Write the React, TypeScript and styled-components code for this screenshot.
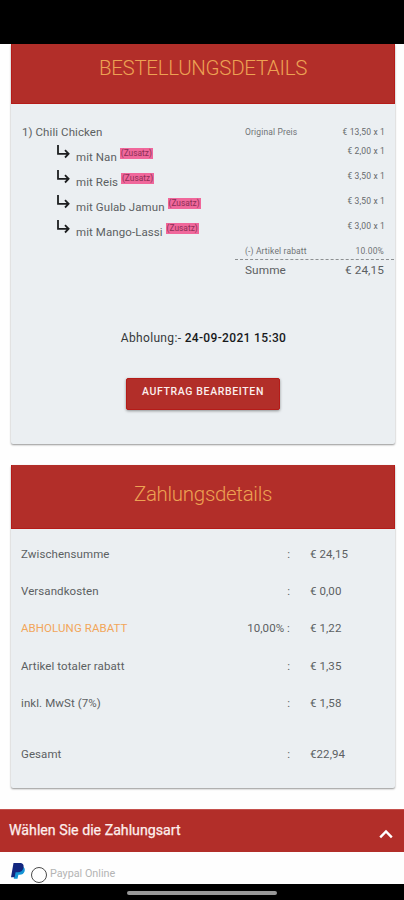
import React from 'react';
import styled, { createGlobalStyle } from 'styled-components';

const GlobalStyle = createGlobalStyle`
  * { box-sizing: border-box; }
  body { margin: 0; background: #fefefe; font-family: Roboto, sans-serif; color: #5c5f62; }
`;

const Screen = styled.main`
  width: 404px;
  height: 900px;
  overflow: hidden;
  display: flex;
  flex-direction: column;
`;

const StatusBar = styled.div`
  height: 44px;
  flex: none;
  background: #000;
`;

const Card = styled.section<{ $height: number; $gap: number }>`
  flex: none;
  height: ${p => p.$height}px;
  margin: 0 9px ${p => p.$gap}px 11px;
  background: #ebeff2;
  border-radius: 2px;
  box-shadow: 0 1px 2px rgba(0, 0, 0, 0.42);
`;

const CardHeader = styled.h2<{ $height: number; $top: number }>`
  margin: 0;
  height: ${p => p.$height}px;
  padding-top: ${p => p.$top}px;
  background: #b22e29;
  border: 1px solid #b51b18;
  border-top-width: 0;
  color: #eda253;
  font-size: 20.5px;
  line-height: 24px;
  font-weight: 300;
  letter-spacing: -0.3px;
  text-align: center;
`;

const OrderBody = styled.div`
  padding: 18px 10px 0 11px;
  display: flex;
  flex-direction: column;
`;

const ItemRow = styled.div`
  display: flex;
  height: 19px;
  line-height: 20px;
`;

const ItemName = styled.span`
  width: 223px;
  font-size: 11.5px;
  letter-spacing: 0.08px;
`;

const SmallLabel = styled.span`
  font-size: 8.5px;
  line-height: 21px;
  letter-spacing: 0.15px;
  color: #707376;
`;

const Price = styled.span`
  margin-left: auto;
  font-size: 8.5px;
  line-height: 20px;
  letter-spacing: 0.15px;
  color: #66696c;
`;

const AddonRow = styled.div`
  display: flex;
  height: 25px;
  padding-left: 34px;
`;

const Arrow = styled.svg`
  width: 14px;
  height: 16px;
  margin: 3px 6px 0 0;
`;

const AddonName = styled.span`
  font-size: 11.5px;
  line-height: 20px;
  padding-top: 6px;
  letter-spacing: 0.08px;
`;

const Tag = styled.span`
  align-self: flex-start;
  margin: 7px 0 0 3px;
  height: 11px;
  width: 33px;
  background: #f0679b;
  color: #8c2f56;
  font-size: 8.4px;
  line-height: 11px;
  text-align: center;
  white-space: nowrap;
`;

const Totals = styled.div`
  margin: 0 -9px 0 213px;
`;

const TotalRow = styled.div<{ $large?: boolean }>`
  display: flex;
  justify-content: space-between;
  padding: 0 10px;
  height: ${p => (p.$large ? 19 : 19)}px;
  line-height: 20px;
  font-size: ${p => (p.$large ? 11.8 : 8.5)}px;
  letter-spacing: ${p => (p.$large ? 0.1 : 0.15)}px;
  color: ${p => (p.$large ? '#5c5f62' : '#707376')};
  border-bottom: ${p => (p.$large ? 'none' : '1px dashed #8d9092')};
`;

const Pickup = styled.p`
  margin: 49px 0 0;
  text-align: center;
  font-size: 12px;
  line-height: 20px;
  letter-spacing: 0.34px;
  color: #35383a;
`;

const PickupTime = styled.b`
  font-weight: 500;
  color: #17191b;
`;

const EditButton = styled.button`
  align-self: center;
  margin: 30px 1px 0 0;
  width: 154px;
  height: 32px;
  padding: 0 0 5px;
  border: 1px solid #b51b18;
  border-radius: 2px;
  background: #b22e29;
  color: #fbeeee;
  font: 500 10.5px/20px Roboto, sans-serif;
  letter-spacing: 0.63px;
  box-shadow: 0 1px 3px rgba(0, 0, 0, 0.4);
`;

const PaymentBody = styled.div`
  padding: 7px 10px 0;
`;

const PaymentRow = styled.div<{ $before?: number }>`
  display: grid;
  grid-template-columns: 200px 78px 1fr;
  margin-top: ${p => p.$before ?? 0}px;
  height: 37.2px;
  line-height: 37px;
  font-size: 11.5px;
  letter-spacing: 0.08px;
`;

const Label = styled.span<{ $accent?: boolean }>`
  color: ${p => (p.$accent ? '#f2a65a' : '#5c5f62')};
`;

const Rate = styled.span`
  text-align: right;
  padding-right: 9px;
`;

const Amount = styled.span`
  padding-left: 11px;
`;

const MethodHeader = styled.div`
  flex: none;
  height: 43px;
  padding: 0 10px 0 9px;
  display: flex;
  align-items: center;
  justify-content: space-between;
  background: #b22e29;
  border-top: 1px solid #c4504c;
  color: #fdeeed;
  font-size: 14.2px;
`;

const MethodTitle = styled.span`
  padding-bottom: 2px;
  -webkit-text-stroke: 0.25px #fdeeed;
`;

const Chevron = styled.svg`
  width: 16px;
  height: 12px;
  margin-top: 5px;
`;

const MethodRow = styled.div`
  flex: none;
  height: 32px;
  padding: 10px 0 0 10px;
  display: flex;
  align-items: flex-start;
`;

const PaypalLogo = styled.svg`
  width: 16px;
  height: 18px;
`;

const Radio = styled.span`
  width: 16px;
  height: 16px;
  margin: 5px 3px 0 5px;
  border: 1.5px solid #4b4b4b;
  border-radius: 50%;
`;

const MethodName = styled.span`
  padding-top: 2px;
  font-size: 10.8px;
  line-height: 20px;
  color: #b4b4b4;
`;

const NavigationBar = styled.footer`
  flex: none;
  height: 16px;
  background: #000;
  display: flex;
  justify-content: center;
  align-items: center;
`;

const HomeHandle = styled.span`
  width: 150px;
  height: 4px;
  margin-top: 1px;
  border-radius: 2px;
  background: #989898;
`;

const addons = [
  { name: 'mit Nan', price: '€ 2,00 x 1' },
  { name: 'mit Reis', price: '€ 3,50 x 1' },
  { name: 'mit Gulab Jamun', price: '€ 3,50 x 1' },
  { name: 'mit Mango-Lassi', price: '€ 3,00 x 1' },
];

const payments = [
  { label: 'Zwischensumme', rate: ':', amount: '€ 24,15' },
  { label: 'Versandkosten', rate: ':', amount: '€ 0,00' },
  { label: 'ABHOLUNG RABATT', rate: '10,00% :', amount: '€ 1,22', accent: true },
  { label: 'Artikel totaler rabatt', rate: ':', amount: '€ 1,35' },
  { label: 'inkl. MwSt (7%)', rate: ':', amount: '€ 1,58' },
  { label: 'Gesamt', rate: ':', amount: '€22,94', before: 14 },
];

export default function App() {
  return (
    <Screen>
      <GlobalStyle />
      <StatusBar />
      <Card $height={400} $gap={21}>
        <CardHeader $height={60} $top={12}>BESTELLUNGSDETAILS</CardHeader>
        <OrderBody>
          <ItemRow>
            <ItemName>1) Chili Chicken</ItemName>
            <SmallLabel>Original Preis</SmallLabel>
            <Price>€ 13,50 x 1</Price>
          </ItemRow>
          {addons.map(a => (
            <AddonRow key={a.name}>
              <Arrow viewBox="0 0 14 16" fill="none" stroke="#1c1e20" strokeWidth="1.8">
                <path d="M2 1v8.8h10.4M9 6.2l3.6 3.6L9 13.5" />
              </Arrow>
              <AddonName>{a.name}</AddonName>
              <Tag>(Zusatz)</Tag>
              <Price>{a.price}</Price>
            </AddonRow>
          ))}
          <Totals>
            <TotalRow><span>(-) Artikel rabatt</span><span>10.00%</span></TotalRow>
            <TotalRow $large><span>Summe</span><span>€ 24,15</span></TotalRow>
          </Totals>
          <Pickup>Abholung:- <PickupTime>24-09-2021 15:30</PickupTime></Pickup>
          <EditButton>AUFTRAG BEARBEITEN</EditButton>
        </OrderBody>
      </Card>
      <Card $height={323} $gap={21}>
        <CardHeader $height={64} $top={17}>Zahlungsdetails</CardHeader>
        <PaymentBody>
          {payments.map(p => (
            <PaymentRow key={p.label} $before={p.before}>
              <Label $accent={p.accent}>{p.label}</Label>
              <Rate>{p.rate}</Rate>
              <Amount>{p.amount}</Amount>
            </PaymentRow>
          ))}
        </PaymentBody>
      </Card>
      <MethodHeader>
        <MethodTitle>Wählen Sie die Zahlungsart</MethodTitle>
        <Chevron viewBox="0 0 16 12" fill="none" stroke="#fff" strokeWidth="2.4">
          <path d="M2.2 9.3 8 3.5l5.8 5.8" />
        </Chevron>
      </MethodHeader>
      <MethodRow>
        <PaypalLogo viewBox="0 0 16 18">
          <path fill="#1594d5" d="M5 5h8.2c1.6 1 1.9 2.5 1.4 4.2-.7 2.5-2.5 3.5-5 3.5H8.4l-.9 4.1H3.8z" />
          <path fill="#13277f" d="M3.5 1h6.2c3.1 0 4.5 1.7 3.8 4.7-.7 3-2.8 4.5-5.8 4.5H5.6l-1 5H1z" />
        </PaypalLogo>
        <Radio />
        <MethodName>Paypal Online</MethodName>
      </MethodRow>
      <NavigationBar><HomeHandle /></NavigationBar>
    </Screen>
  );
}
